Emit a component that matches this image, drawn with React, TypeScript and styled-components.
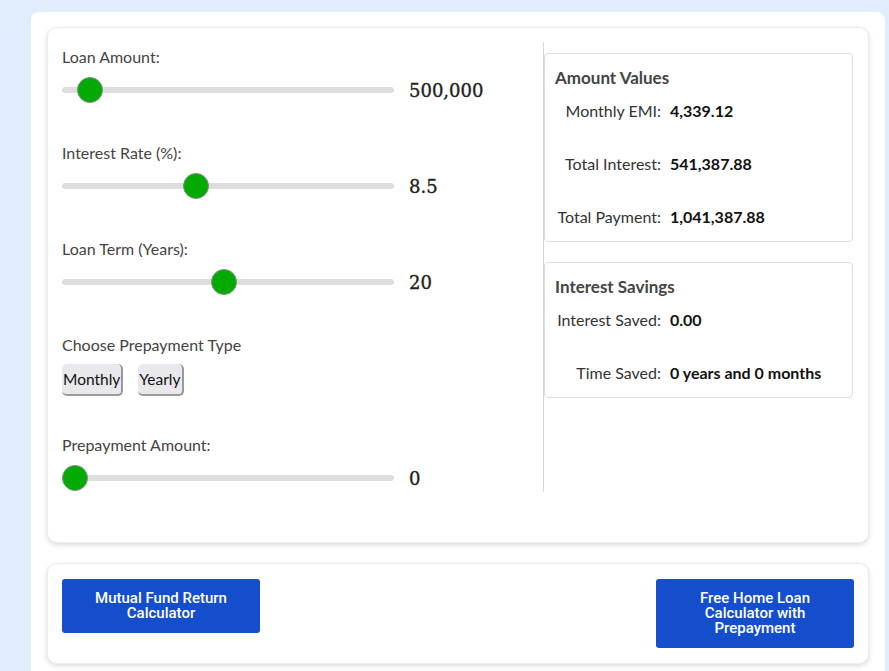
import { useState } from "react"
import styled, { createGlobalStyle } from "styled-components"

const GlobalStyle = createGlobalStyle`
  html, body {
    margin: 0;
    padding: 0;
    background: #e1edfd;
    font-family: Lato, "Liberation Sans", sans-serif;
  }
`

type SliderProps = {
  label: string
  min: number
  max: number
  initial: number
  format?: (value: number) => string
}

const Slider = ({ label, min, max, initial, format }: SliderProps) => {
  const [value, setValue] = useState(initial)
  return (
    <SliderGroup>
      <Label>{label}</Label>
      <SliderRow>
        <Range type="range" min={min} max={max} step="any" value={value} onChange={(e) => setValue(Number(e.target.value))} />
        <SliderValue>{format ? format(value) : value}</SliderValue>
      </SliderRow>
    </SliderGroup>
  )
}

const Stat = ({ label, value }: { label: string; value: string }) => (
  <StatRow>
    <StatLabel>{label}</StatLabel>
    <StatValue>{value}</StatValue>
  </StatRow>
)

export default function App() {
  return (
    <Page>
      <GlobalStyle />
      <Wrapper>
        <Card>
          <Columns>
            <Inputs>
              <Slider label="Loan Amount:" min={0} max={10000000} initial={500000} format={(v) => v.toLocaleString("en-US")} />
              <Slider label="Interest Rate (%):" min={1} max={20} initial={8.5} />
              <Slider label="Loan Term (Years):" min={1} max={40} initial={20} />
              <PrepayType>
                <Label>Choose Prepayment Type</Label>
                <TypeButtons>
                  <TypeButton>Monthly</TypeButton>
                  <TypeButton>Yearly</TypeButton>
                </TypeButtons>
              </PrepayType>
              <Slider label="Prepayment Amount:" min={0} max={100000} initial={0} />
            </Inputs>
            <Results>
              <ResultBox>
                <ResultTitle>Amount Values</ResultTitle>
                <Stat label="Monthly EMI:" value="4,339.12" />
                <Stat label="Total Interest:" value="541,387.88" />
                <Stat label="Total Payment:" value="1,041,387.88" />
              </ResultBox>
              <ResultBox>
                <ResultTitle>Interest Savings</ResultTitle>
                <Stat label="Interest Saved:" value="0.00" />
                <Stat label="Time Saved:" value="0 years and 0 months" />
              </ResultBox>
            </Results>
          </Columns>
        </Card>
        <LinkCard>
          <LinkButton>Mutual Fund Return Calculator</LinkButton>
          <LinkButton>Free Home Loan Calculator with Prepayment</LinkButton>
        </LinkCard>
      </Wrapper>
    </Page>
  )
}

const Page = styled.div`
  height: 671px;
  overflow: hidden;
  padding: 12px 4px 0 31px;
`
const Wrapper = styled.div`
  background: #fff;
  border-radius: 8px 8px 0 0;
  padding: 15px 16px 30px;
  display: flex;
  flex-direction: column;
  gap: 20px;
`
const Card = styled.div`
  background: #fff;
  border: 1px solid #ebebf3;
  border-radius: 10px;
  box-shadow: 0 2px 5px rgba(60, 60, 90, 0.18);
  padding: 14px 15px 50px 14px;
`
const Columns = styled.div`
  display: flex;
`
const Inputs = styled.div`
  width: 481px;
  flex: none;
  border-right: 1px solid #d8d8d8;
  height: 450px;
`
const SliderGroup = styled.div`
  height: 96px;
  padding-top: 5px;
  box-sizing: border-box;
`
const Label = styled.div`
  font-size: 16px;
  line-height: 20px;
  color: #444;
`
const SliderRow = styled.div`
  display: flex;
  align-items: center;
  gap: 15px;
  margin-top: 10px;
  height: 26px;
`
const Range = styled.input`
  appearance: none;
  -webkit-appearance: none;
  width: 332px;
  height: 6px;
  margin: 0;
  border-radius: 3px;
  background: #dddddd;
  outline: none;

  &::-webkit-slider-thumb {
    -webkit-appearance: none;
    width: 26px;
    height: 26px;
    border-radius: 50%;
    background: #04aa04;
    border: 1px solid #7c8f7c;
    box-sizing: border-box;
    cursor: pointer;
  }
`
const SliderValue = styled.div`
  font-family: "DejaVu Serif", "Liberation Serif", serif;
  font-size: 18px;
  -webkit-text-stroke: 0.35px #222;
  color: #222;
`
const PrepayType = styled.div`
  height: 100px;
  padding-top: 5px;
  box-sizing: border-box;
`
const TypeButtons = styled.div`
  display: flex;
  gap: 15px;
  margin-top: 9px;
`
const TypeButton = styled.button`
  height: 32px;
  padding: 0 1px;
  font-family: Lato, sans-serif;
  font-size: 15.5px;
  color: #111;
  background: #e9e9ed;
  border: none;
  border-right: 2px solid #999;
  border-bottom: 2px solid #999;
  border-radius: 5px;
`
const Results = styled.div`
  flex: 1;
  padding-top: 11px;
  display: flex;
  flex-direction: column;
  gap: 20px;
  min-width: 0;
`
const ResultBox = styled.div`
  border: 1px solid #dedede;
  border-radius: 4px;
  padding: 13px 10px 6px;
  display: flex;
  flex-direction: column;
`
const ResultTitle = styled.div`
  font-size: 17px;
  line-height: 22px;
  font-weight: 700;
  color: #444;
  margin-bottom: 11px;
`
const StatRow = styled.div`
  display: flex;
  gap: 9px;
  height: 53px;
  line-height: 22px;
  &:last-child {
    height: 29px;
  }
`
const StatLabel = styled.div`
  width: 106px;
  text-align: right;
  font-size: 16px;
  color: #333;
  white-space: nowrap;
`
const StatValue = styled.div`
  font-size: 16px;
  font-weight: 700;
  color: #111;
  white-space: nowrap;
`
const LinkCard = styled.div`
  background: #fff;
  border: 1px solid #ebebf3;
  border-radius: 10px;
  box-shadow: 0 2px 5px rgba(60, 60, 90, 0.18);
  padding: 15px 14px 15px;
  display: flex;
  justify-content: space-between;
  align-items: flex-start;
  height: 101px;
  box-sizing: border-box;
`
const LinkButton = styled.button`
  width: 198px;
  padding: 12px 24px;
  background: #154ecd;
  color: #fff;
  border: none;
  border-radius: 3px;
  font-family: Roboto, sans-serif;
  font-size: 15px;
  font-weight: 500;
  line-height: 15px;
`
